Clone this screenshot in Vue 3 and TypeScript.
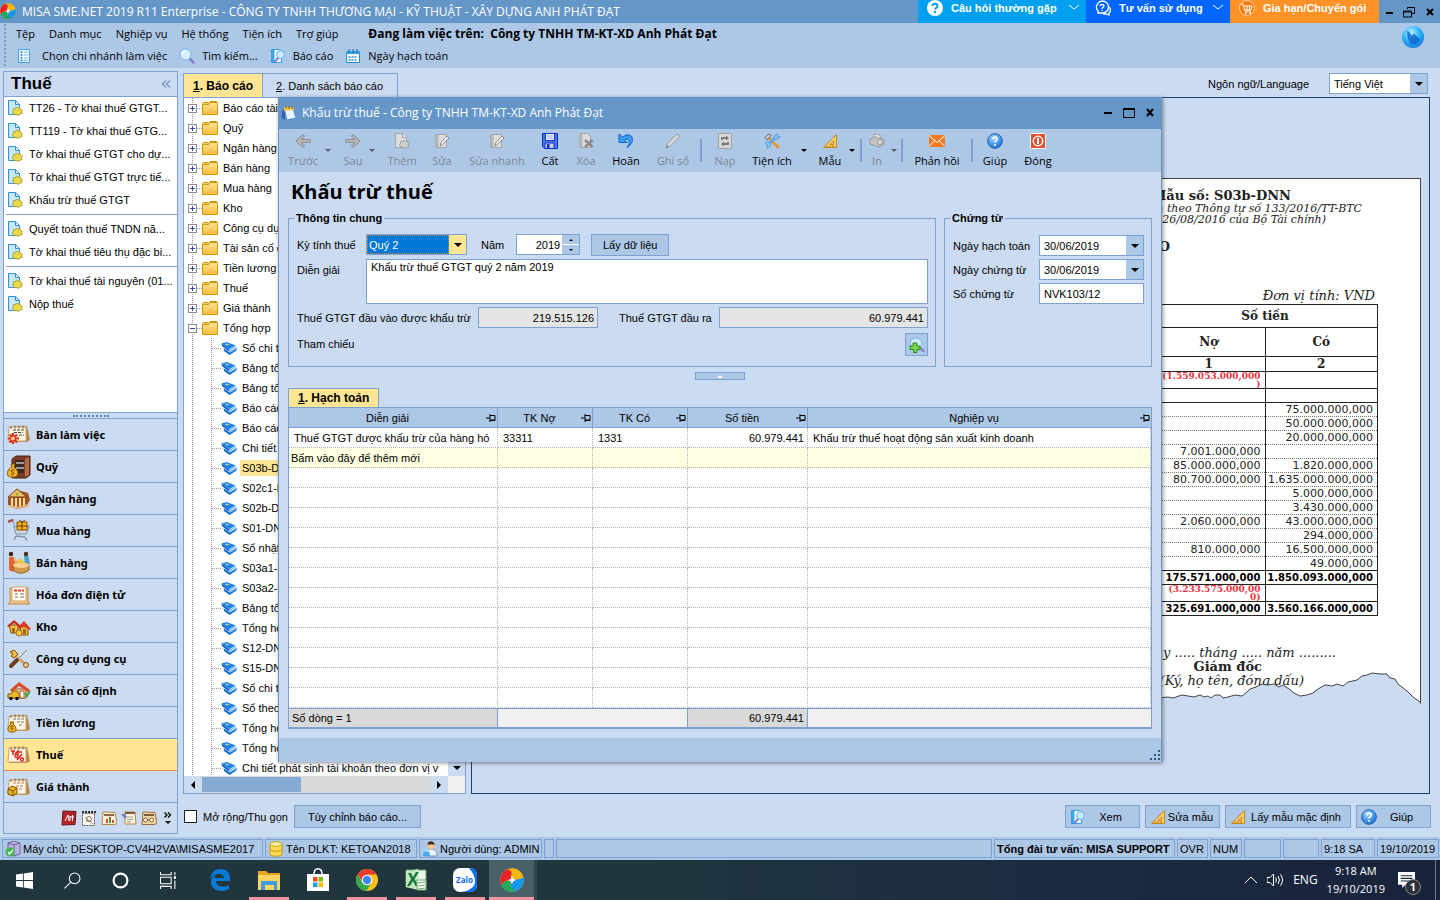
<script setup lang="ts">
import { ref } from 'vue'

interface TreeLeaf { label: string; selected?: boolean }
interface ReportRow { debit: string; credit: string }
interface Tool { kind: 'btn' | 'drop' | 'sep'; label?: string; icon?: string; off?: boolean }

const menus = ['Tệp', 'Danh mục', 'Nghiệp vụ', 'Hệ thống', 'Tiện ích', 'Trợ giúp']

const quickTools = [
  { label: 'Chọn chi nhánh làm việc', icon: 'list' },
  { label: 'Tìm kiếm...', icon: 'search' },
  { label: 'Báo cáo', icon: 'report' },
  { label: 'Ngày hạch toán', icon: 'calendar' },
]

const taskGroups: string[][] = [
  [
    'TT26 - Tờ khai thuế GTGT...',
    'TT119 - Tờ khai thuế GTG...',
    'Tờ khai thuế GTGT cho dự...',
    'Tờ khai thuế GTGT trực tiế...',
    'Khấu trừ thuế GTGT',
  ],
  ['Quyết toán thuế TNDN nă...', 'Tờ khai thuế tiêu thụ đặc bi...'],
  ['Tờ khai thuế tài nguyên (01...', 'Nộp thuế'],
]

const modules = [
  { label: 'Bàn làm việc', icon: 'm-desk' },
  { label: 'Quỹ', icon: 'm-safe' },
  { label: 'Ngân hàng', icon: 'm-bank' },
  { label: 'Mua hàng', icon: 'm-cart' },
  { label: 'Bán hàng', icon: 'm-sell' },
  { label: 'Hóa đơn điện tử', icon: 'm-invoice' },
  { label: 'Kho', icon: 'm-store' },
  { label: 'Công cụ dụng cụ', icon: 'm-tools' },
  { label: 'Tài sản cố định', icon: 'm-asset' },
  { label: 'Tiền lương', icon: 'm-salary' },
  { label: 'Thuế', icon: 'm-tax' },
  { label: 'Giá thành', icon: 'm-cost' },
]
const activeModule = ref('Thuế')
const extraModules = ['x-book', 'x-check', 'x-chart', 'x-note', 'x-link']

const folders = [
  'Báo cáo tài chính', 'Quỹ', 'Ngân hàng', 'Bán hàng', 'Mua hàng', 'Kho', 'Công cụ dụng cụ',
  'Tài sản cố định', 'Tiền lương', 'Thuế', 'Giá thành',
]
const leaves: TreeLeaf[] = [
  { label: 'Sổ chi tiết' }, { label: 'Bảng tổng' }, { label: 'Bảng tổng' },
  { label: 'Báo cáo' }, { label: 'Báo cáo' }, { label: 'Chi tiết' },
  { label: 'S03b-DNN', selected: true }, { label: 'S02c1-DNN' }, { label: 'S02b-DNN' },
  { label: 'S01-DNN' }, { label: 'Sổ nhật ký' }, { label: 'S03a1-DNN' }, { label: 'S03a2-DNN' },
  { label: 'Bảng tổng' }, { label: 'Tổng hợp' }, { label: 'S12-DNN' }, { label: 'S15-DNN' },
  { label: 'Sổ chi tiết' }, { label: 'Sổ theo dõi' }, { label: 'Tổng hợp' }, { label: 'Tổng hợp' },
  { label: 'Chi tiết phát sinh tài khoản theo đơn vị v' },
]

const reportRows: ReportRow[] = [
  { debit: '', credit: '75.000.000,000' },
  { debit: '', credit: '50.000.000,000' },
  { debit: '', credit: '20.000.000,000' },
  { debit: '7.001.000,000', credit: '' },
  { debit: '85.000.000,000', credit: '1.820.000,000' },
  { debit: '80.700.000,000', credit: '1.635.000.000,000' },
  { debit: '', credit: '5.000.000,000' },
  { debit: '', credit: '3.430.000,000' },
  { debit: '2.060.000,000', credit: '43.000.000,000' },
  { debit: '', credit: '294.000,000' },
  { debit: '810.000,000', credit: '16.500.000,000' },
  { debit: '', credit: '49.000,000' },
]

const tools: Tool[] = [
  { kind: 'btn', label: 'Trước', icon: 'g-prev', off: true },
  { kind: 'drop', off: true },
  { kind: 'btn', label: 'Sau', icon: 'g-next', off: true },
  { kind: 'drop', off: true },
  { kind: 'btn', label: 'Thêm', icon: 'g-add', off: true },
  { kind: 'btn', label: 'Sửa', icon: 'g-edit', off: true },
  { kind: 'btn', label: 'Sửa nhanh', icon: 'g-edit', off: true },
  { kind: 'btn', label: 'Cất', icon: 'save' },
  { kind: 'btn', label: 'Xóa', icon: 'g-del', off: true },
  { kind: 'btn', label: 'Hoãn', icon: 'undo' },
  { kind: 'btn', label: 'Ghi sổ', icon: 'g-pen', off: true },
  { kind: 'sep' },
  { kind: 'btn', label: 'Nạp', icon: 'g-reload', off: true },
  { kind: 'btn', label: 'Tiện ích', icon: 'utils' },
  { kind: 'drop' },
  { kind: 'btn', label: 'Mẫu', icon: 'ruler' },
  { kind: 'drop' },
  { kind: 'sep' },
  { kind: 'btn', label: 'In', icon: 'g-print', off: true },
  { kind: 'drop', off: true },
  { kind: 'sep' },
  { kind: 'btn', label: 'Phản hồi', icon: 'mail' },
  { kind: 'sep' },
  { kind: 'btn', label: 'Giúp', icon: 'help' },
  { kind: 'btn', label: 'Đóng', icon: 'power' },
]

const columns = ['Diễn giải', 'TK Nợ', 'TK Có', 'Số tiền', 'Nghiệp vụ']

const period = ref('Quý 2')
const year = ref('2019')
const description = ref('Khấu trừ thuế GTGT quý 2 năm 2019')
const inputTax = ref('219.515.126')
const outputTax = ref('60.979.441')
const postingDate = ref('30/06/2019')
const voucherDate = ref('30/06/2019')
const voucherNo = ref('NVK103/12')
const language = ref('Tiếng Việt')
const expandAll = ref(false)

const pinned = [
  { icon: 't-edge', name: 'Edge', open: false },
  { icon: 't-folder', name: 'File Explorer', open: true },
  { icon: 't-store', name: 'Store', open: false },
  { icon: 't-chrome', name: 'Chrome', open: true },
  { icon: 't-excel', name: 'Excel', open: true },
  { icon: 't-zalo', name: 'Zalo', open: true },
]
</script>

<template>
  <svg class="defs" aria-hidden="true">
    <defs>
      <linearGradient id="gold" x1="0" y1="0" x2="0" y2="1"><stop offset="0" stop-color="#ffe596" /><stop offset="1" stop-color="#f7bb3c" /></linearGradient>
      <radialGradient id="ball" cx=".4" cy=".3" r=".8"><stop offset="0" stop-color="#a9dcff" /><stop offset=".6" stop-color="#3d93ea" /><stop offset="1" stop-color="#175fc4" /></radialGradient>
      <radialGradient id="globe" cx=".4" cy=".3" r=".8"><stop offset="0" stop-color="#b5f4ff" /><stop offset=".5" stop-color="#2eb1fa" /><stop offset="1" stop-color="#0c6fd8" /></radialGradient>

      <symbol id="logo" viewBox="0 0 16 16">
        <circle cx="8" cy="8" r="7.800" fill="#fcb713" />
        <path d="M8 8C5 8.500 3 8 1 11.500A8 8 0 0 1 5 .8C8 2 8.500 3 7 5.500z" fill="#e8222c" />
        <path d="M8 8c3-.5 5 0 7.700-2A8 8 0 0 1 9 15.800C7 14 7 12 8 8z" fill="#1597ec" />
        <path d="M1 11.500C2 8.500 5 8 7.500 9 6.500 12 8 14 11 15.300 6 17 2 15 1 11.500z" fill="#25a95c" />
        <path d="M8 5.300 8.800 7.200 10.700 8 8.800 8.800 8 10.700 7.200 8.800 5.300 8 7.200 7.200z" fill="#fff" />
      </symbol>
      <symbol id="list" viewBox="0 0 16 16">
        <path d="M2.500 1.500h11v13h-11z" fill="#eef8ff" stroke="#3b9fe0" /><path d="M4.500 4h2M4.500 7h2M4.500 10h2M4.500 12.500h2" stroke="#1f7fd0" stroke-width="1.500" /><path d="M8 4h4M8 7h4M8 10h4M8 12.500h4" stroke="#7cbcf0" />
      </symbol>
      <symbol id="search" viewBox="0 0 16 16">
        <path d="m10 10 4.500 4.500" stroke="#8b7fd0" stroke-width="2.500" stroke-linecap="round" /><circle cx="6.500" cy="6.500" r="5.500" fill="#d8f0ff" stroke="#6db8ec" /><path d="M3.500 6a3 3 0 0 1 3-3" stroke="#fff" stroke-width="1.500" fill="none" />
      </symbol>
      <symbol id="report" viewBox="0 0 16 16">
        <path d="M1.500 1.500h8l2 2v11h-10z" fill="#fff" stroke="#2e9fe6" /><path d="M2 2h2.500v12H2z" fill="#3aa5ea" /><path d="m9 9-4 4.500" stroke="#8b7fd0" stroke-width="2.200" stroke-linecap="round" /><circle cx="10.500" cy="6.500" r="4" fill="#c9eaff" stroke="#5bb0ea" />
      </symbol>
      <symbol id="calendar" viewBox="0 0 16 16">
        <path d="M1.500 3.500h13v11h-13z" fill="#f4fbff" stroke="#2589d0" /><path d="M1 3h14v3H1z" fill="#3aa0e8" /><path d="M4 1v4M8 1v4M12 1v4" stroke="#16649f" /><path d="M3.500 9h9M3.500 12h9" stroke="#3a8ccc" stroke-width="1.500" stroke-dasharray="2 1" />
      </symbol>
      <symbol id="task" viewBox="0 0 16 16">
        <path d="M1.500.5h7l4 4v10h-11z" fill="#c5e8ff" stroke="#2f91d8" /><path d="M8.500.5v4h4z" fill="#fff" stroke="#2f91d8" /><path d="m9.500 7 1.500 1.200 2-.6.6 1.900 1.900 1-1 1.500.6 1.600-2.300.5-1.300 1.400L9.500 14.500l-2.400.3-.4-1.700-1.700-1.300 1.500-1.300.2-1.900 2-.1z" fill="#ead94a" stroke="#a8921b" stroke-width=".8" />
      </symbol>
      <symbol id="folder" viewBox="0 0 16 16">
        <path d="M.5 13.500v-10l1-1h4l1.500 2h-5l-1 9zM7 2.500l1-1h6.500v3" fill="#f8cf68" stroke="#c68f00" /><path d="M.5 4.500h6l1-2h8v12H.5z" fill="url(#gold)" stroke="#d09a09" />
      </symbol>
      <symbol id="book" viewBox="0 0 16 16">
        <path d="M.5 3.500 6 2l8.500 3.500L8 9.500z" fill="#1c86e8" /><path d="M.5 3.500 8 9.500v2L1 6z" fill="#0c5abf" /><path d="m8 9.500 6.500-4 .5 1.500-7 4.500z" fill="#8cc6f6" />
        <path d="m2.500 8 5.500 4 7.500-4.500v3L8.500 15 3 11z" fill="#0f6ad0" /><path d="m8.500 12.500 6.500-3.700" stroke="#bfe0ff" stroke-width=".9" /><path d="m4 4.200 2.500-.8 2 .9-2.500.9z" fill="#f0cf7c" />
      </symbol>
      <symbol id="notes" viewBox="0 0 16 16">
        <path d="m1 6 3-3v12l-3-2z" fill="#4455b8" /><path d="M3 3h9l3 10-9 2z" fill="#e9f6ff" stroke="#4c8fdc" /><path d="M3 2h9l1 3-10 1z" fill="#f5cf4c" /><path d="M5 1v3M8 1v3M11 1v3" stroke="#704a10" />
      </symbol>
      <symbol id="ruler" viewBox="0 0 16 16">
        <path d="M14.500 1.500v13h-13z" fill="#fbd065" stroke="#c8851a" /><path d="M11.500 8v3.500H8z" fill="#c9dcf0" stroke="#c8851a" /><path d="M5 14v-1.500M8 14v-1.500M11 14v-1.500" stroke="#87540b" />
      </symbol>
      <symbol id="help" viewBox="0 0 16 16">
        <circle cx="8" cy="8" r="7.300" fill="url(#ball)" stroke="#2160ae" /><path d="M5.800 6.200C5.800 3.300 10.400 3.500 10.200 6.200 10 7.700 8 7.700 8 9.600" fill="none" stroke="#fff" stroke-width="1.700" /><circle cx="8" cy="12" r="1.100" fill="#fff" />
      </symbol>
      <symbol id="addfind" viewBox="0 0 16 16">
        <path d="m10.500 10.500 4 3.500" stroke="#8b7fd0" stroke-width="2.500" stroke-linecap="round" /><circle cx="7" cy="6.500" r="5.500" fill="#cdeeff" stroke="#7bbfe8" /><path d="M4 6h4v3h3v3.500H8v3H4.500v-3H1V9h3z" fill="#77d64a" stroke="#278a1c" />
      </symbol>
      <symbol id="g-prev" viewBox="0 0 16 16"><path d="M8 1.500 9.500 3 6.500 6.500h9v3h-9l3 3.500L8 14.500 1 8z" fill="#b5b5b5" stroke="#8e8e8e" /></symbol>
      <symbol id="g-next" viewBox="0 0 16 16"><path d="M8 1.500 6.500 3l3 3.500h-9v3h9l-3 3.500L8 14.500 15 8z" fill="#b5b5b5" stroke="#8e8e8e" /></symbol>
      <symbol id="g-add" viewBox="0 0 16 16"><path d="M1.500.5h7l4 4v10h-11z" fill="#ddd" stroke="#a3a3a3" /><path d="M8.500.5v4h4" fill="#eee" stroke="#a3a3a3" /><path d="m9.500 7 1.500 1.200 2-.6.6 1.900 1.900 1-1 1.500.6 1.600-2.300.5-1.300 1.400L9.500 14.500l-2.400.3-.4-1.700-1.700-1.300 1.500-1.300.2-1.900 2-.1z" fill="#cfcfcf" stroke="#959595" stroke-width=".8" /></symbol>
      <symbol id="g-edit" viewBox="0 0 16 16"><path d="M1.500 1.500h11v13h-11z" fill="#ddd" stroke="#a3a3a3" /><path d="M1.500 1.500h3v13h-3z" fill="#b5b5b5" /><path d="m6 13 1-3.500L13 3l2 2-6.500 6.500z" fill="#eee" stroke="#8b8b8b" /></symbol>
      <symbol id="g-del" viewBox="0 0 16 16"><path d="M1.500.5h8l3 3v11h-11z" fill="#ddd" stroke="#a3a3a3" /><path d="M1.500.5h3v14h-3z" fill="#b5b5b5" /><path d="m7 7 7.500 7M14.500 7 7 14" stroke="#888" stroke-width="2.500" /></symbol>
      <symbol id="g-pen" viewBox="0 0 16 16"><path d="m1 15 1.500-4.500L12 1l3 2.500-9.500 9.500z" fill="#d6d6d6" stroke="#9a9a9a" /><path d="m1 15 1-2.500L3.500 14z" fill="#777" /></symbol>
      <symbol id="g-reload" viewBox="0 0 16 16"><path d="M1.500.5h13v15h-13z" fill="#d7d7d7" stroke="#a3a3a3" /><path d="M5 7V5h5M11 9v2H6" fill="none" stroke="#777" stroke-width="1.800" /><path d="M9 2.500 12 5 9 7.500zM7 8.500 4 11l3 2.500z" fill="#777" /></symbol>
      <symbol id="g-print" viewBox="0 0 16 16"><path d="m5 1 6 1 1 5-7-1z" fill="#e2e2e2" stroke="#a0a0a0" /><path d="m1 6 5-2 9 2.500v4.500L10 14 1 11z" fill="#c4c4c4" stroke="#999" /><circle cx="11" cy="9" r="2.500" fill="#ddd" stroke="#999" /></symbol>
      <symbol id="save" viewBox="0 0 16 16"><path d="M.5.500h15v15H2.500L.5 13.500z" fill="#4a78f2" stroke="#0b2fc0" /><path d="M3.500.5h9v7h-9z" fill="#f1f5ff" stroke="#0b2fc0" /><path d="M3 10h9v5.500H3z" fill="#c8d4fa" stroke="#0b2fc0" /><path d="M5 11h2.500v4H5z" fill="#0b2fc0" /><path d="M5 3h6M5 5.200h6" stroke="#8ca4ee" /></symbol>
      <symbol id="undo" viewBox="0 0 16 16"><path d="M1 1v8.500h8L6.500 7C10 4.500 13.500 8 9 14.500c8-4.500 7-14-1-12.500L4.500 4z" fill="#3b9bf0" stroke="#1568c6" /></symbol>
      <symbol id="utils" viewBox="0 0 16 16"><path d="m5.500 5.500 8.500 8.500" stroke="#e09a2c" stroke-width="3" stroke-linecap="round" /><path d="M1 4.500 4.500 1l3 1.500L3 7z" fill="#c7c7c7" stroke="#555" stroke-width=".8" /><path d="m3 13 8-8" stroke="#5ba7ec" stroke-width="3" /><path d="M10 5a3.500 3.500 0 0 1 4-4l-2 2.500 1 1L15.500 3A3.500 3.500 0 0 1 11 6.500zM1 10a3 3 0 0 1 5 3.500l-3 2 .5-3z" fill="#8cc8f8" stroke="#3486cf" stroke-width=".6" /></symbol>
      <symbol id="mail" viewBox="0 0 16 16"><path d="M0 2h16v12H0z" fill="#f47b20" /><path d="m0 2.500 8 7 8-7M0 13.500l6-6M16 13.500l-6-6" fill="none" stroke="#fff" /></symbol>
      <symbol id="power" viewBox="0 0 16 16"><rect x=".5" y=".5" width="15" height="15" rx="1" fill="#e0502c" stroke="#fff" /><circle cx="8" cy="8" r="4.700" fill="none" stroke="#fff" stroke-width="1.500" /><path d="M8 5v6" stroke="#fff" stroke-width="2" /></symbol>
      <symbol id="pin" viewBox="0 0 10 8"><path d="M0 4h4M4 0v8M4 1.500h5v5H4" fill="none" stroke="#000" /><path d="M4 5.500h5v1H4z" /></symbol>

      <symbol id="card" viewBox="0 0 24 20"><path d="m3 3 17-1 3 14-3 2H3z" fill="#b9854a" /><path d="M2 3h17v14H1z" fill="#fff6e4" stroke="#c9a573" /><path d="M4 2v3M8 1.500v3M12 1.500v3M16 1.500v3" stroke="#7c5b3a" /></symbol>
      <symbol id="m-desk" viewBox="0 0 24 24"><use href="#card" width="24" height="20" y="1" /><path d="M6 7h11M7 9.500h9M12 12h5" stroke="#444" stroke-dasharray="3 1" /><path d="M6 10v11M1 15.500h11M2.500 11.500l7.500 8M10 11.500l-7.500 8" stroke="#dd3117" stroke-width="2.200" /><circle cx="6" cy="15.500" r="2" fill="#fc9" /></symbol>
      <symbol id="m-safe" viewBox="0 0 24 24"><path d="m5 4 4-3h14v19l-4 3H5z" fill="#7b3d27" stroke="#4d2014" /><path d="M8 5h9v13H8z" fill="#3c2a20" /><path d="m18 4 4-2v18l-4 2z" fill="#b66a48" /><path d="M9 8h8M9 13h8" stroke="#999" stroke-width="2" /><path d="M4 9h4l-1 3c5 3 5 10 0 10H4c-5 0-5-7 1-10z" fill="#f2b526" stroke="#8a5605" /><path d="M7.500 15c-4-1-4 2-2 2s2 3-1.500 2" fill="none" stroke="#6b3a00" /></symbol>
      <symbol id="m-bank" viewBox="0 0 24 24"><path d="M1 11 10 3l11 3 2 7-4 7-9 2-9-4z" fill="#9d5323" /><path d="m1 10 9-8 10 8z" fill="#f0bd6c" stroke="#7d3c12" /><path d="M5 11v8M9 11v9M13 11v9M17 11v8" stroke="#ffe0a0" stroke-width="2" /><path d="m2 19 9 2 11-3" stroke="#e7b478" stroke-width="2" fill="none" /><circle cx="10" cy="7" r="1.700" fill="#a5b32a" /></symbol>
      <symbol id="m-cart" viewBox="0 0 24 24"><path d="M1 2 6 1l3 13h10l3-8" fill="none" stroke="#8ba6c0" stroke-width="1.500" /><path d="M7 8h15l-3 7H9z" fill="#cddae6" stroke="#8197ab" /><path d="M10 3h10v8H10z" fill="#f6b61e" stroke="#875000" /><path d="M15 3v8M10 7h10M12 1l3 2 3-2" stroke="#6c3800" fill="none" /><path d="M1 3l5-2" stroke="#b04a3a" stroke-width="2" /><path d="m9 17 9 1M9 17l-2 4M18 18l2 4" stroke="#8197ab" stroke-width="1.500" /></symbol>
      <symbol id="m-sell" viewBox="0 0 24 24"><path d="M2 6h5l2 7-3 8-4-2z" fill="#e2632b" /><circle cx="4" cy="3" r="2.200" fill="#3b2416" /><path d="m7 8 4 4" stroke="#f0b78c" stroke-width="2" /><path d="m17 5 4-1 2 9h-5z" fill="#4aa2c9" /><circle cx="19" cy="3" r="2.200" fill="#432d1e" /><path d="M6 14c4-4 12-4 16 0v5c-4 4-11 4-15 1z" fill="#d59a4d" stroke="#93601f" /><ellipse cx="14" cy="14" rx="8" ry="3" fill="#f6d196" /><path d="m10 10 3-3 4 5-3 1z" fill="#f5c92b" /></symbol>
      <symbol id="m-invoice" viewBox="0 0 24 24"><path d="M3 5h18v14l2 2H1l2-2z" fill="#efc688" stroke="#bd8a48" /><path d="M5 4h14v14H5z" fill="#fffaf2" stroke="#d4a86b" /><path d="M7 7.500h10" stroke="#e0382a" stroke-width="2" stroke-dasharray="3 1" /><path d="M8 11h3M13 11h4M8 14h3M13 14h4" stroke="#777" /></symbol>
      <symbol id="m-store" viewBox="0 0 24 24"><path d="M2 10h9v8H4zM13 12h8v8h-6z" fill="#f4c142" stroke="#7f4c0e" /><path d="m0 11 7-6 7 6-2 1-5-4-5 4z" fill="#c62a1e" /><path d="m11 12 6-6 7 8-2 1-5-4-5 3z" fill="#dc3a20" /><path d="M5 13h3v5H5zM16 14h3v5h-3z" fill="#ad6512" /><circle cx="12" cy="18" r="3" fill="#f6cd45" stroke="#9c6310" /></symbol>
      <symbol id="m-tools" viewBox="0 0 24 24"><path d="m8 8 11 10" stroke="#d5a15c" stroke-width="3" stroke-linecap="round" /><path d="M3 5 7 3l4 4-4 4-3-2 2-2z" fill="#f4be38" stroke="#7c4c12" /><path d="m20 3-11 11" stroke="#d8dde2" stroke-width="3" /><path d="m20 3-11 11" stroke="#666" stroke-width=".8" /><path d="m10 13-6 6" stroke="#6d3f20" stroke-width="4" stroke-linecap="round" /><circle cx="19" cy="18" r="2.500" fill="#f2cf8c" stroke="#7c4c12" /></symbol>
      <symbol id="m-asset" viewBox="0 0 24 24"><path d="M6 10h13v9H6z" fill="#f6cf98" stroke="#9a5a26" /><path d="m3 11 9-8 11 8-2 2-9-6-7 6z" fill="#dc4a24" /><path d="M13 12h4v7h-4z" fill="#fff" stroke="#a65a2a" /><path d="M1 15h3l2-3h4l2 3 1 4H1z" fill="#f2b92a" stroke="#855b09" /><circle cx="4" cy="19.500" r="1.700" /><circle cx="10" cy="19.500" r="1.700" /><path d="m18 14 2 3 3-5" stroke="#3ca33c" stroke-width="2" fill="none" /></symbol>
      <symbol id="m-salary" viewBox="0 0 24 24"><use href="#card" width="24" height="20" y="2" /><path d="M6 8h11M10 11h7M12 14h4" stroke="#777" stroke-dasharray="3 1" /><path d="M3 11h4l-1 2c4 3 4 8 0 8H4c-4 0-4-5 0-8z" fill="#f2b526" stroke="#8a5605" /><path d="M6.500 15.500c-3-1-3 1-1.500 1.500s1 2-1.500 1" fill="none" stroke="#6b3a00" /></symbol>
      <symbol id="m-tax" viewBox="0 0 24 24"><use href="#card" width="24" height="20" y="2" /><path d="M4 8h4M6 8v4M8 11l3-3v4M12 9h3" stroke="#e01818" stroke-width="1.500" fill="none" /><path d="m15 11-5 6" stroke="#e01818" stroke-width="1.500" /><circle cx="9.500" cy="13" r="1.500" fill="none" stroke="#e01818" stroke-width="1.300" /><circle cx="15" cy="16.500" r="1.500" fill="none" stroke="#e01818" stroke-width="1.300" /></symbol>
      <symbol id="m-cost" viewBox="0 0 24 24"><use href="#card" width="24" height="20" y="2" /><path d="M6 8h11M9 11h8M12 14h4" stroke="#d07060" stroke-dasharray="3 1" /><path d="m1 14 4-3 5 2v5l-4 3-5-2z" fill="#f0b41f" stroke="#7d5204" /><path d="m1 14 5 2 4-3M6 16v5" stroke="#7d5204" fill="none" /></symbol>
      <symbol id="x-book" viewBox="0 0 16 16"><path d="m2 1 13 .5-1 13L1 15z" fill="#b3232a" stroke="#6d0f14" /><path d="m4 11 3-6 1 6M9 6v5M11.500 5v6M9 7h4" stroke="#fff" fill="none" /></symbol>
      <symbol id="x-check" viewBox="0 0 16 16"><path d="M1.500 3.500h12v12h-12z" fill="#fff8ea" stroke="#555" stroke-dasharray="2 1" /><path d="M1 2h14" stroke="#333" stroke-width="2" stroke-dasharray="2 1" /><path d="m4 7 3 3 5 4M5 11h5" stroke="#999" /><circle cx="8" cy="9" r="2.500" fill="none" stroke="#777" /></symbol>
      <symbol id="x-chart" viewBox="0 0 16 16"><path d="m2 2 12 .5 2 11-3 1H1z" fill="#fff3dc" stroke="#b9854a" /><path d="M3 4h10v2H3z" fill="#8c6a48" /><path d="M6 13V9M9 13V7M12 13v-3" stroke="#dd4a2a" stroke-width="2" /><path d="M9 13V9" stroke="#3f9f3f" stroke-width="2" /></symbol>
      <symbol id="x-note" viewBox="0 0 16 16"><path d="m4 2 10 0 1 12H4z" fill="#fff3dc" stroke="#b9854a" /><path d="M4 2h10v2H4z" fill="#7b5b3d" /><path d="M6 7h6M6 9.500h6M6 12h4" stroke="#999" /><path d="M0 4h4l2 3-2 2z" fill="#6d7fc4" /></symbol>
      <symbol id="x-link" viewBox="0 0 16 16"><path d="m2 2 12 .5 2 11-3 1H1z" fill="#f4d7a6" stroke="#9c6f3a" /><path d="M3 4h10v2H3z" fill="#7b5b3d" /><circle cx="4.500" cy="10" r="2" fill="#fff" stroke="#8c5a28" /><circle cx="10.500" cy="10" r="2" fill="#fff" stroke="#8c5a28" /><path d="M6 10h3" stroke="#8c5a28" /></symbol>

      <symbol id="server" viewBox="0 0 16 16"><path d="m3 2 6-2 6 2v11l-6 2-6-2z" fill="#b9b4dc" stroke="#6c659d" /><path d="m3 2 6 2 6-2M9 4v11" stroke="#6c659d" fill="none" /><circle cx="5" cy="11" r="4.500" fill="#3fb34b" /><path d="m3 11 1.500 2L8 9" stroke="#fff" stroke-width="1.500" fill="none" /></symbol>
      <symbol id="db" viewBox="0 0 16 16"><path d="M2 3v10c0 3 12 3 12 0V3z" fill="#fbdc57" stroke="#c89a12" /><ellipse cx="8" cy="3" rx="6" ry="2.300" fill="#fff1a4" stroke="#c89a12" /><path d="M2 8c0 3 12 3 12 0" fill="none" stroke="#c89a12" /></symbol>
      <symbol id="user" viewBox="0 0 16 16"><path d="M3 15c0-6 3-7 6-7s6 1 6 7z" fill="#eef4fb" stroke="#7591b5" /><circle cx="9" cy="4.500" r="3.500" fill="#f7c690" /><path d="M5.500 4c0-5 7-5 7 0-2-1-4-1-7 0z" fill="#3a2a1c" /><path d="M1 15c0-4 1.500-5 3.500-5S8 11 8 15z" fill="#4aa8ee" /><circle cx="4.500" cy="9" r="2" fill="#9fd4fa" /></symbol>

      <symbol id="t-edge" viewBox="0 0 24 24"><path d="M2 11C3 4 7 1 13 1c6 0 9 4 9 9v3H8c0 6 8 7 13 4v4c-7 4-18 2-18-7 0-4 2-6 5-7-1 1-1 2-1 3h9c0-5-10-6-14 1z" fill="#0b7ad6" /></symbol>
      <symbol id="t-folder" viewBox="0 0 24 24"><path d="M1 3h8l2 2h12v4H1z" fill="#e5a424" /><path d="M1 7h22v15H1z" fill="#fcd462" /><path d="M4 22v-9h16v9h-3v-5H8v5z" fill="#3f9ce0" /></symbol>
      <symbol id="t-store" viewBox="0 0 24 24"><path d="M1 6h22v17H1z" fill="#fff" /><path d="M8 6c0-7 8-7 8 0" fill="none" stroke="#fff" stroke-width="1.500" /><path d="M7 9h4.500v4.500H7z" fill="#f25022" /><path d="M12.500 9H17v4.500h-4.500z" fill="#7fba00" /><path d="M7 14.500h4.500V19H7z" fill="#00a4ef" /><path d="M12.500 14.500H17V19h-4.500z" fill="#ffb900" /></symbol>
      <symbol id="t-chrome" viewBox="0 0 24 24"><circle cx="12" cy="12" r="11" fill="#fbc116" /><path d="M12 12 2.500 6.500A11 11 0 0 1 21.500 6.500H12z" fill="#e33b2e" /><path d="M2.500 6.500 8 16l3.500 7A11 11 0 0 1 2.500 6.500z" fill="#2da94f" /><path d="M8 14.500 2.500 6.500 12 7z" fill="#e33b2e" /><path d="M7 14 11.500 23 16 15z" fill="#2da94f" /><circle cx="12" cy="12" r="5.300" fill="#fff" /><circle cx="12" cy="12" r="4.200" fill="#4285f4" /></symbol>
      <symbol id="t-excel" viewBox="0 0 24 24"><path d="M2 2h20v17H2z" fill="#e9f6e9" stroke="#5aa85c" /><path d="m2 4 12-3v21L2 19z" fill="#c6e6c4" /><path d="m4 5 3 0 2 4 3-5h3l-4.500 7L15 18h-3.500L9 13l-3 5H3l4-7z" fill="#1d7c3b" /><path d="M13 12h9v10h-9z" fill="#fff" stroke="#69a868" /><path d="m14 15 7-1M14 18l7-1M14 21l7-1" stroke="#69a868" /></symbol>
      <symbol id="t-zalo" viewBox="0 0 24 24"><rect width="24" height="24" rx="7" fill="#fff" /><path d="M7 0h10q7 0 7 7v10q0 7-7 7H8q10-1 13-8 2-8-5-16z" fill="#0b6cf5" /><path d="M4 2c-5 5-4 13 0 18l-1 3c10 1 20-2 19-11S13-3 4 2z" fill="#fff" /></symbol>
    </defs>
  </svg>

  <div class="screen">
    <main class="app">
      <header class="titlebar">
        <svg class="i16"><use href="#logo" /></svg>
        <h1>MISA SME.NET 2019 R11 Enterprise - CÔNG TY TNHH THƯƠNG MẠI - KỸ THUẬT - XÂY DỰNG ANH PHÁT ĐẠT</h1>
        <button class="promo faq" type="button">
          <svg class="i16" viewBox="0 0 16 16"><circle cx="8" cy="8" r="8" fill="#fff" /><path d="M5.500 6C5.500 3 10.500 3 10.500 6 10.500 8 8 8 8 9.500" fill="none" stroke="#00a0f0" stroke-width="2" /><circle cx="8" cy="12" r="1.200" fill="#00a0f0" /></svg>
          <span>Câu hỏi thường gặp</span>
          <svg class="chev" viewBox="0 0 10 6"><path d="m0 1 5 4 5-4" /></svg>
        </button>
        <button class="promo advice" type="button">
          <svg class="i16" viewBox="0 0 16 16"><path d="M3 13V11A6 6 0 1 1 7 13z" fill="none" stroke="#fff" stroke-width="1.300" /><path d="M14 7c3 3 1 5 0 6v2l-3-1H8" fill="none" stroke="#fff" stroke-width="1.300" /><path d="M5 6c0-2 4-2 4 0 0 1-2 1-2 3M7 10v1" fill="none" stroke="#fff" stroke-width="1.300" /></svg>
          <span>Tư vấn sử dụng</span>
          <svg class="chev" viewBox="0 0 10 6"><path d="m0 1 5 4 5-4" /></svg>
        </button>
        <button class="promo renew" type="button">
          <svg class="i16" viewBox="0 0 16 16"><circle cx="8" cy="8" r="7.500" fill="#ff7a10" stroke="#ffd2a0" /><path d="M2 4h2l2 7h6M5 6h8l-1 4H6M8 6v4M10.500 6v4" fill="none" stroke="#fff" /><circle cx="7" cy="13" r="1" fill="#fff" /><circle cx="11" cy="13" r="1" fill="#fff" /></svg>
          <span>Gia hạn/Chuyển gói</span>
        </button>
        <div class="winctl">
          <button type="button" aria-label="Thu nhỏ"><svg viewBox="0 0 12 12"><path d="M3 7h7" stroke-width="2" /></svg></button>
          <button type="button" aria-label="Khôi phục"><svg viewBox="0 0 12 12"><path d="M4.500 3V1.500h7v6H9" /><path d="M.5 5h8v6h-8zM.5 6h8" /></svg></button>
          <button type="button" aria-label="Đóng ứng dụng"><svg viewBox="0 0 12 12"><path d="m3 3 6 6M9 3 3 9" stroke-width="2" /></svg></button>
        </div>
      </header>

      <div class="menus">
        <div class="bars">
          <nav class="menubar">
            <button v-for="m in menus" :key="m" type="button">{{ m }}</button>
            <strong>Đang làm việc trên:&nbsp; Công ty TNHH TM-KT-XD Anh Phát Đạt</strong>
          </nav>
          <div class="quickbar">
            <button v-for="t in quickTools" :key="t.label" type="button">
              <svg class="i16"><use :href="'#' + t.icon" /></svg>{{ t.label }}
            </button>
          </div>
        </div>
        <svg class="globe" viewBox="0 0 22 22"><circle cx="11" cy="11" r="11" fill="url(#globe)" /><path d="M5 5c3 0 4 3 4 5 1-1 2-2 4-2 1 3 4 3 5 6-2 4-5 5-9 4-2-2-4-7-4-13z" fill="#0b62c8" opacity=".8" /></svg>
      </div>

      <div class="workspace">
        <aside class="sidebar">
          <div class="side-head"><h2>Thuế</h2><button type="button" aria-label="Thu gọn"><svg viewBox="0 0 9 8"><path d="M4 .5.5 4 4 7.500M8 .5 4.500 4 8 7.500" /></svg></button></div>
          <div class="tasks">
            <ul v-for="(g, gi) in taskGroups" :key="gi">
              <li v-for="t in g" :key="t"><a href="#"><svg class="i16"><use href="#task" /></svg>{{ t }}</a></li>
            </ul>
          </div>
          <div class="splitter"><i></i></div>
          <nav class="modules">
            <button v-for="m in modules" :key="m.label" type="button" :class="{ active: m.label === activeModule }" @click="activeModule = m.label">
              <svg><use :href="'#' + m.icon" /></svg>{{ m.label }}
            </button>
          </nav>
          <div class="extras">
            <button v-for="x in extraModules" :key="x" type="button" :aria-label="x"><svg class="i16"><use :href="'#' + x" /></svg></button>
            <button type="button" class="more" aria-label="Thêm mục"><svg viewBox="0 0 8 12"><path d="m.5.5 2.500 2.500L.5 5.500M4 .5 6.500 3 4 5.500" fill="none" stroke="#000" stroke-width="1.300" /><path d="M1 9h6l-3 3z" /></svg></button>
          </div>
        </aside>

        <section class="content">
          <div class="tabrow">
            <button type="button" class="tab on"><u>1</u>. Báo cáo</button>
            <button type="button" class="tab"><u>2</u>. Danh sách báo cáo</button>
            <label for="lang">Ngôn ngữ/Language</label>
            <div class="combo lang">
              <select id="lang" v-model="language"><option>Tiếng Việt</option></select>
              <span class="drop"><svg viewBox="0 0 8 4"><path d="M0 0h8L4 4z" /></svg></span>
            </div>
          </div>

          <div class="panes">
            <div class="treepane">
              <div class="treebody">
                <ul class="tree">
                  <li v-for="f in folders" :key="f"><span class="box plus"></span><span class="dots"></span><svg class="i16"><use href="#folder" /></svg><span class="name">{{ f }}</span></li>
                  <li><span class="box"></span><span class="dots"></span><svg class="i16"><use href="#folder" /></svg><span class="name">Tổng hợp</span></li>
                  <li v-for="(l, i) in leaves" :key="i" class="leaf"><span class="dots"></span><svg class="i16"><use href="#book" /></svg><span class="name" :class="{ sel: l.selected }">{{ l.label }}</span></li>
                </ul>
                <div class="vscroll"><button type="button" aria-label="Cuộn xuống"><svg viewBox="0 0 8 4"><path d="M0 0h8L4 4z" /></svg></button></div>
              </div>
              <div class="hscroll">
                <button type="button" aria-label="Cuộn trái"><svg viewBox="0 0 5 8"><path d="M5 0v8L1 4z" /></svg></button>
                <span class="thumb"></span>
                <button type="button" class="end" aria-label="Cuộn phải"><svg viewBox="0 0 5 8"><path d="M0 0v8l4-4z" /></svg></button>
                <span class="corner"></span>
              </div>
            </div>

            <div class="preview">
              <article class="paper">
                <p class="form-no">Mẫu số: S03b-DNN</p>
                <p class="rule-1">(Ban hành theo Thông tư số 133/2016/TT-BTC</p>
                <p class="rule-2">Ngày 26/08/2016 của Bộ Tài chính)</p>
                <p class="caption">BÁO CÁO</p>
                <p class="unit">Đơn vị tính: VND</p>
                <table>
                  <thead>
                    <tr class="h1"><th colspan="2">Số tiền</th></tr>
                    <tr class="h2"><th>Nợ</th><th>Có</th></tr>
                    <tr class="h3"><th>1</th><th>2</th></tr>
                  </thead>
                  <tbody>
                    <tr class="red"><td>(1.559.053.000,000<br>)</td><td></td></tr>
                    <tr class="solid"><td></td><td></td></tr>
                    <tr v-for="(r, i) in reportRows" :key="i" :class="{ tail: i === reportRows.length - 1 }"><td>{{ r.debit }}</td><td>{{ r.credit }}</td></tr>
                    <tr class="sum"><td>175.571.000,000</td><td>1.850.093.000,000</td></tr>
                    <tr class="red"><td>(3.233.575.000,00<br>0)</td><td></td></tr>
                    <tr class="sum"><td>325.691.000,000</td><td>3.560.166.000,000</td></tr>
                  </tbody>
                </table>
                <p class="sign-date">Ngày ..... tháng ..... năm .........</p>
                <p class="sign-role">Giám đốc</p>
                <p class="sign-note">(Ký, họ tên, đóng dấu)</p>
                <svg class="torn" viewBox="0 0 260 34"><path d="M-2 28 7 27 12 28 21 25 27 26 33 27 39 25 43 27 47 26 50 28 54 25 59 25 62 28 67 27 74 25 81 26 86 22 89 19 95 17 101 14 106 15 113 14 118 17 122 15 128 19 133 23 139 26 146 25 152 23 157 19 164 15 171 16 176 14 182 16 187 12 196 10 201 6 206 5 211 3 219 4 226 4 229 8 234 9 237 14 246 21 252 27 259 32 262 38 0 38z" /></svg>
              </article>
            </div>
          </div>

          <div class="footrow">
            <label class="check"><input v-model="expandAll" type="checkbox">Mở rộng/Thu gọn</label>
            <button type="button" class="btn custom">Tùy chỉnh báo cáo...</button>
            <span class="grow"></span>
            <button type="button" class="btn w75"><svg class="i16"><use href="#report" /></svg><span>Xem</span></button>
            <button type="button" class="btn w75"><svg class="i16"><use href="#ruler" /></svg><span>Sửa mẫu</span></button>
            <button type="button" class="btn w126"><svg class="i16"><use href="#ruler" /></svg><span>Lấy mẫu mặc định</span></button>
            <button type="button" class="btn w75"><svg class="i16"><use href="#help" /></svg><span>Giúp</span></button>
          </div>
        </section>
      </div>

      <footer class="status">
        <span><svg class="i16"><use href="#server" /></svg>Máy chủ: DESKTOP-CV4H2VA\MISASME2017</span>
        <span><svg class="i16"><use href="#db" /></svg>Tên DLKT: KETOAN2018</span>
        <span><svg class="i16"><use href="#user" /></svg>Người dùng: ADMIN</span>
        <span></span>
        <span></span>
        <span><b>Tổng đài tư vấn: MISA SUPPORT</b></span>
        <span>OVR</span>
        <span>NUM</span>
        <span></span>
        <span></span>
        <span>9:18 SA</span>
        <span>19/10/2019</span>
      </footer>
    </main>

    <section class="dialog" role="dialog" aria-label="Khấu trừ thuế">
      <header class="dlg-title">
        <svg class="i16"><use href="#notes" /></svg>
        <h2>Khấu trừ thuế - Công ty TNHH TM-KT-XD Anh Phát Đạt</h2>
        <button type="button" aria-label="Thu nhỏ cửa sổ"><svg viewBox="0 0 12 12"><path d="M2 6h8" stroke-width="2" /></svg></button>
        <button type="button" aria-label="Phóng to cửa sổ"><svg viewBox="0 0 12 12"><path d="M.5 1.500h11v9H.5zM0 2.500h12" /></svg></button>
        <button type="button" aria-label="Đóng cửa sổ"><svg viewBox="0 0 12 12"><path d="m3 2 6 7M9 2 3 9" stroke-width="2" /></svg></button>
      </header>

      <div class="toolbar">
        <template v-for="(t, i) in tools" :key="i">
          <button v-if="t.kind === 'btn'" type="button" class="tool" :disabled="t.off"><svg class="i16"><use :href="'#' + t.icon" /></svg>{{ t.label }}</button>
          <button v-else-if="t.kind === 'drop'" type="button" class="tdrop" :disabled="t.off" aria-label="Mở danh sách"><svg viewBox="0 0 6 3"><path d="M0 0h6L3 3z" /></svg></button>
          <i v-else class="tsep"></i>
        </template>
      </div>

      <div class="dlg-body">
        <h3>Khấu trừ thuế</h3>
        <div class="groups">
          <fieldset class="general">
            <legend>Thông tin chung</legend>
            <div class="frow">
              <label class="l1" for="period">Kỳ tính thuế</label>
              <div class="combo period">
                <select id="period" v-model="period"><option>Quý 1</option><option>Quý 2</option></select>
                <span class="drop"><svg viewBox="0 0 8 4"><path d="M0 0h8L4 4z" /></svg></span>
              </div>
              <label class="l-year" for="year">Năm</label>
              <div class="spin">
                <input id="year" v-model="year" type="text">
                <div><button type="button" aria-label="Tăng"><svg viewBox="0 0 4 2"><path d="M0 2h4L2 0z" /></svg></button><button type="button" aria-label="Giảm"><svg viewBox="0 0 4 2"><path d="M0 0h4L2 2z" /></svg></button></div>
              </div>
              <button type="button" class="btn load">Lấy dữ liệu</button>
            </div>
            <div class="frow desc">
              <label class="l1" for="desc">Diễn giải</label>
              <textarea id="desc" v-model="description"></textarea>
            </div>
            <div class="frow tax">
              <label class="l-in" for="tin">Thuế GTGT đầu vào được khấu trừ</label>
              <input id="tin" v-model="inputTax" class="num" type="text" readonly>
              <label class="l-out" for="tout">Thuế GTGT đầu ra</label>
              <input id="tout" v-model="outputTax" class="num wide" type="text" readonly>
            </div>
            <div class="frow refs">
              <span>Tham chiếu</span>
              <button type="button" class="btn icon" aria-label="Thêm tham chiếu"><svg class="i16"><use href="#addfind" /></svg></button>
            </div>
          </fieldset>
          <fieldset class="voucher">
            <legend>Chứng từ</legend>
            <div class="frow"><label for="d1">Ngày hạch toán</label><div class="combo"><input id="d1" v-model="postingDate" type="text"><button type="button" class="drop" aria-label="Chọn ngày hạch toán"><svg viewBox="0 0 8 4"><path d="M0 0h8L4 4z" /></svg></button></div></div>
            <div class="frow"><label for="d2">Ngày chứng từ</label><div class="combo"><input id="d2" v-model="voucherDate" type="text"><button type="button" class="drop" aria-label="Chọn ngày chứng từ"><svg viewBox="0 0 8 4"><path d="M0 0h8L4 4z" /></svg></button></div></div>
            <div class="frow"><label for="d3">Số chứng từ</label><div class="combo"><input id="d3" v-model="voucherNo" type="text"></div></div>
          </fieldset>
        </div>

        <button type="button" class="handle" aria-label="Thu gọn phần chung"><svg viewBox="0 0 6 3"><path d="M0 3h6L3 0z" fill="#fff" /></svg></button>
        <button type="button" class="tab on sub"><u>1</u>. Hạch toán</button>

        <table class="grid">
          <colgroup><col class="c1"><col class="c2"><col class="c2"><col class="c4"><col></colgroup>
          <thead>
            <tr><th v-for="c in columns" :key="c"><div><span>{{ c }}</span><svg><use href="#pin" /></svg></div></th></tr>
          </thead>
          <tbody>
            <tr><td class="first">Thuế GTGT được khấu trừ của hàng hó</td><td>33311</td><td>1331</td><td class="right">60.979.441</td><td>Khấu trừ thuế hoạt động sản xuất kinh doanh</td></tr>
            <tr class="new"><td>Bấm vào đây để thêm mới</td><td></td><td></td><td></td><td></td></tr>
            <tr v-for="n in 12" :key="n"><td></td><td></td><td></td><td></td><td></td></tr>
          </tbody>
          <tfoot>
            <tr><td class="dark">Số dòng = 1</td><td colspan="2"></td><td class="dark right">60.979.441</td><td></td></tr>
          </tfoot>
        </table>
      </div>
      <footer class="dlg-foot"><svg viewBox="0 0 11 11"><path d="M9 1h2M5 5h2M9 5h2M1 9h2M5 9h2M9 9h2" stroke="#35507c" stroke-width="2" /></svg></footer>
    </section>

    <footer class="taskbar">
      <button type="button" class="sys" aria-label="Start"><svg viewBox="0 0 16 16" width="17" height="17"><path d="M0 2.300 6.500 1.400v6.100H0zM7.300 1.300 16 0v7.500H7.300zM0 8.400h6.500v6.200L0 13.700zM7.300 8.400H16V16l-8.700-1.300z" fill="#fff" /></svg></button>
      <button type="button" class="sys" aria-label="Tìm kiếm"><svg viewBox="0 0 16 16" width="17" height="17"><circle cx="10" cy="6" r="5" /><path d="M6.500 9.500.5 15.500" /></svg></button>
      <button type="button" class="sys" aria-label="Cortana"><svg viewBox="0 0 16 16" width="17" height="17"><circle cx="8" cy="8" r="6.500" stroke-width="2" /></svg></button>
      <button type="button" class="sys gap" aria-label="Task view"><svg viewBox="0 0 16 16" width="17" height="17"><path d="M.5 0v2.500h10V0M.5 16v-2.500h10V16M.5 5h10v6H.5zM14 0v3M14 8v8" /><path d="M13 4h2v2.500h-2z" fill="#fff" stroke="none" /></svg></button>
      <button v-for="p in pinned" :key="p.icon" type="button" class="pin" :class="{ open: p.open }" :aria-label="p.name"><svg><use :href="'#' + p.icon" /></svg><b v-if="p.icon === 't-zalo'">Zalo</b></button>
      <button type="button" class="pin open current" aria-label="MISA"><svg><use href="#logo" /></svg></button>
      <span class="grow"></span>
      <svg class="tray" viewBox="0 0 16 16"><path d="m2 11 6-6 6 6" /></svg>
      <svg class="tray" viewBox="0 0 16 16"><path d="M0 5.500h3l3.500-3.500v12L3 10.500H0zM8.500 5.500q2 2.500 0 5M11 4q3 4 0 8M13.500 2.500q4 5.500 0 11" /></svg>
      <span class="eng">ENG</span>
      <time>9:18 AM<br>19/10/2019</time>
      <button type="button" class="notif" aria-label="Thông báo"><svg viewBox="0 0 16 16"><path d="M0 0h16v12H7l-3 3v-3H0z" fill="#fff" /><path d="M2.500 3.500h11M2.500 6h11M2.500 8.500h8" stroke="#1b2b40" /></svg><b>1</b></button>
    </footer>
  </div>
</template>

<style>
html, body { margin: 0; background: #cbdbf1; }
</style>

<style scoped>
* { box-sizing: border-box; }
.defs { position: absolute; width: 0; height: 0; }
.screen {
  --bg: #cbdbf1; --bar: #adc7e7; --title: #6596c8; --line: #7ba2d2; --on: #ffe594;
  --ui: "Open Sans", "Noto Sans", sans-serif;
  position: relative; display: flex; flex-direction: column; height: 100vh; overflow: hidden;
  font: 11px/14px "Liberation Sans", Arial, sans-serif; color: #000; background: var(--bg);
}
button { font: inherit; color: inherit; background: none; border: 0; padding: 0; margin: 0; white-space: nowrap; }
input, select, textarea { font: inherit; color: inherit; border: 0; border-radius: 0; margin: 0; padding: 0; background: none; outline: 0; min-width: 0; }
h1, h2, h3, p, ul { margin: 0; padding: 0; }
ul { list-style: none; }
.i16 { width: 16px; height: 16px; flex: none; }
.grow { flex: 1; }
.app { flex: 1; min-height: 0; display: flex; flex-direction: column; }

.titlebar { display: flex; flex: none; height: 23px; background: var(--title); color: #fff; overflow: hidden; }
.titlebar > .i16 { margin-top: 3px; }
h1 { flex: 1; margin-left: 6px; font: 12px/23px var(--ui); white-space: nowrap; overflow: hidden; }
.promo { display: flex; align-items: flex-start; height: 23px; padding: 0 7px 0 9px; font-weight: bold; font-size: 11px; line-height: 16px; }
.promo span { flex: 1; text-align: left; margin-left: 8px; }
.promo .chev { width: 10px; height: 6px; margin-top: 4px; fill: none; stroke: #fff; }
.faq { width: 168px; background: #00a0f0; }
.advice { width: 144px; background: #0066ff; }
.renew { width: 149px; background: #ff9226; }
.winctl { display: flex; width: 61px; align-items: center; justify-content: space-around; }
.winctl svg { display: block; width: 12px; height: 12px; fill: none; stroke: #000; }

.menus { display: flex; flex: none; justify-content: space-between; height: 45px; background: var(--bar); font: 11px/22px var(--ui); }
.bars { margin-left: 3px; padding-left: 13px; background: radial-gradient(circle, #7f9abf 1px, transparent 1px) 0 0 / 4px 4px repeat-y; }
.menubar { display: flex; gap: 14px; }
.menubar strong { margin-left: 16px; font: bold 12px/22px var(--ui); white-space: nowrap; }
.quickbar { display: flex; gap: 12px; }
.quickbar button { display: flex; align-items: center; gap: 7px; height: 22px; }
.quickbar button:first-child .i16 { margin-right: 3px; }
.globe { width: 22px; height: 22px; margin: 3px 16px 0 0; }

.workspace { flex: 1; min-height: 0; display: flex; gap: 5px; padding: 3px 9px 3px 3px; }
.sidebar { width: 175px; flex: none; display: flex; flex-direction: column; border: 1px solid var(--line); background: var(--bg); }
.side-head { display: flex; align-items: center; justify-content: space-between; height: 25px; padding: 0 6px 0 7px; border-bottom: 1px solid var(--line); }
.side-head h2 { font: bold 17px/24px "Liberation Sans", sans-serif; }
.side-head svg { display: block; width: 9px; height: 8px; fill: none; stroke: #35599a; }
.tasks { flex: 1; background: #fff; }
.tasks ul + ul { margin: 2px 0 0 2px; padding-top: 3px; border-top: 1px solid var(--line); }
.tasks a { display: flex; align-items: center; gap: 6px; height: 23px; padding: 0 0 2px 3px; color: #000; text-decoration: none; white-space: nowrap; }
.tasks ul + ul a { padding-left: 1px; }
.splitter { height: 7px; display: flex; align-items: center; justify-content: center; border: solid var(--line); border-width: 1px 0; }
.splitter i { width: 36px; border-top: 2px dotted #5b85bd; }
.modules button { display: flex; width: 100%; align-items: center; gap: 5px; height: 32px; padding-left: 3px; border-bottom: 1px solid var(--line); font: bold 11px/16px "Noto Sans", "Open Sans", sans-serif; }
.modules svg { width: 24px; height: 24px; }
.modules .active { background: var(--on); border-bottom-color: #f28c3c; }
.extras { display: flex; align-items: center; justify-content: flex-end; gap: 4px; height: 30px; padding-right: 5px; }
.extras svg { display: block; }
.more { margin-left: 3px; }
.more svg { width: 8px; height: 12px; }

.content { flex: 1; min-width: 0; display: flex; flex-direction: column; padding-top: 2px; }
.tabrow { display: flex; flex: none; height: 24px; align-items: flex-start; padding-right: 3px; }
.tab { height: 24px; padding: 0 14px 0 13px; border: 1px solid var(--line); border-bottom: 0; }
.tab.on { padding: 0 9px; background: var(--on); font-weight: bold; font-size: 12px; }
.tab + .tab { border-left: 0; }
.tabrow label { margin-left: auto; margin-right: 20px; line-height: 22px; }
.combo { display: flex; height: 21px; border: 1px solid var(--line); background: #fff; }
.combo select, .combo input { flex: 1; appearance: none; padding: 0 4px; }
.drop { display: flex; align-items: center; justify-content: center; width: 17px; background: var(--bar); }
.drop svg { width: 8px; height: 4px; }
.combo.lang { width: 99px; }

.panes { flex: 1; display: flex; gap: 5px; min-height: 0; padding-right: 1px; }
.treepane { width: 283px; flex: none; display: flex; flex-direction: column; border: 1px solid var(--line); background: #fff; }
.treebody { flex: 1; min-height: 0; display: flex; overflow: hidden; }
.tree { flex: 1; overflow: hidden; }
.tree li { display: flex; align-items: center; height: 20px; padding-left: 4px; white-space: nowrap; background: repeating-linear-gradient(#999 0 1px, transparent 1px 2px) 8px 0 / 1px 100% no-repeat; }
.tree .box { width: 9px; height: 9px; flex: none; border: 1px solid #8c8c8c; background: linear-gradient(#2b4f97, #2b4f97) center / 5px 1px no-repeat, #fff; }
.tree .box.plus { background: linear-gradient(#2b4f97, #2b4f97) center / 5px 1px no-repeat, linear-gradient(#2b4f97, #2b4f97) center / 1px 5px no-repeat, #fff; }
.tree .dots { width: 5px; border-top: 1px dotted #999; }
.tree .name { margin-left: 3px; padding: 1px 2px; }
.tree .leaf { padding-left: 28px; background: repeating-linear-gradient(#999 0 1px, transparent 1px 2px) 8px 0 / 1px 100% no-repeat, repeating-linear-gradient(#999 0 1px, transparent 1px 2px) 27px 0 / 1px 100% no-repeat; }
.tree .leaf .dots { width: 9px; }
.tree .sel { background: var(--on); }
.vscroll { width: 17px; display: flex; flex-direction: column; justify-content: flex-end; background: #d9d9d9; }
.vscroll button { display: flex; align-items: center; justify-content: center; height: 16px; background: var(--bg); }
.vscroll svg { width: 8px; height: 4px; }
.hscroll { display: flex; flex: none; height: 17px; background: #d9d9d9; }
.hscroll button { display: flex; align-items: center; justify-content: center; width: 17px; background: var(--bg); }
.hscroll svg { width: 5px; height: 8px; }
.thumb { width: 99px; margin: 1px 0 1px 1px; background: #86abd4; }
.hscroll .end { margin-left: auto; }
.corner { width: 17px; background: #f0f0f0; }

.preview { flex: 1; display: flex; justify-content: flex-end; align-items: flex-start; border: 1px solid #1f3f77; padding: 80px 8px 0 0; overflow: hidden; }
.paper { position: relative; width: 700px; padding: 10px 0 14px; background: #fff; border: solid #444; border-width: 1px 1px 0 0; font-family: "DejaVu Serif", serif; text-align: right; color: #222; }
.paper p { font-size: 13px; line-height: 14px; white-space: nowrap; }
.paper .form-no { padding-right: 129px; font-weight: bold; }
.paper .rule-1 { padding-right: 58px; font-size: 11px; line-height: 11px; font-style: italic; }
.paper .rule-2 { padding-right: 94px; font-size: 11px; line-height: 11px; font-style: italic; }
.paper .caption { padding: 15px 250px 0 0; font-weight: bold; }
.paper .unit { padding: 35px 45px 0 0; font-style: italic; }
.paper table { width: 226px; margin: 1px 42px 0 auto; border-collapse: collapse; table-layout: fixed; font: 11px/11px "DejaVu Sans", sans-serif; }
.paper th { padding: 0; border: 1px solid #222; text-align: center; font: bold 12px/12px "DejaVu Serif", serif; }
.paper td { height: 14px; padding: 0 4px 0 0; border: solid #222; border-width: 0 1px; border-bottom: 1px dotted #777; white-space: nowrap; }
.paper .h1 th { height: 23px; }
.paper .h2 th { height: 29px; }
.paper .h3 th { height: 15px; }
.paper .solid td, .paper .tail td, .paper .red td, .paper .sum td { border-bottom: 1px solid #222; }
.paper .sum td { font-weight: bold; font-size: 10px; color: #000; }
.paper .red td { height: 17px; color: #f0323c; font: bold 9px/8px "DejaVu Serif", serif; }
.paper .sign-date { padding: 30px 84px 0 0; font-style: italic; }
.paper .sign-role { padding-right: 158px; font-weight: bold; }
.paper .sign-note { padding-right: 116px; font-style: italic; }
.torn { position: absolute; right: -1px; bottom: -2px; width: 260px; height: 34px; fill: var(--bg); stroke: #444; }

.footrow { display: flex; flex: none; align-items: center; height: 40px; padding-top: 5px; }
.check { display: flex; align-items: center; gap: 6px; width: 111px; white-space: nowrap; }
.check input { appearance: none; width: 13px; height: 13px; border: 1px solid #222; background: #fff; margin-left: 1px; }
.btn { display: flex; align-items: center; justify-content: center; height: 23px; border: 1px solid var(--line); background: var(--bar); }
.btn span { flex: 1; text-align: center; }
.footrow .btn { padding: 0 4px; margin-left: 5px; }
.footrow .custom { width: 127px; margin-left: 0; }
.footrow .w75 { width: 75px; }
.footrow .w126 { width: 126px; }

.status { display: grid; flex: none; grid-template-columns: 261px 152px 123px 10px 1fr 181px 31px 32px 37px 36px 54px 62px; gap: 2px; height: 23px; padding: 2px 1px 2px 2px; background: var(--bar); }
.status span { display: flex; align-items: center; gap: 2px; padding-left: 2px; border: 1px solid var(--line); white-space: nowrap; }

.dialog { position: absolute; top: 97px; left: 278px; right: 278px; bottom: 138px; display: flex; flex-direction: column; border: 1px solid var(--title); border-top: 0; background: var(--bg); box-shadow: 1px 1px 4px rgba(0, 0, 0, .45); }
.dlg-title { display: flex; align-items: center; gap: 9px; height: 32px; flex: none; padding: 0 5px 0 2px; background: var(--title); color: #fff; }
.dlg-title h2 { flex: 1; margin-left: -4px; font: 12px/16px var(--ui); }
.dlg-title button svg { display: block; width: 12px; height: 12px; fill: none; stroke: #000; }
.toolbar { display: grid; flex: none; height: 43px; padding-left: 4px; background: var(--bar); font: 11px/16px var(--ui);
  grid-template-columns: 40px 16px 28px 16px 38px 42px 68px 38px 34px 46px 48px 8px 40px 54px 14px 34px 10px 8px 24px 10px 6px 64px 6px 40px 46px; }
.tool { display: flex; flex-direction: column; align-items: center; gap: 4px; padding-top: 4px; }
.tool:disabled { color: #7d8894; }
.tdrop { justify-self: start; width: 10px; }
.tdrop svg { display: block; margin: auto; width: 6px; height: 3px; }
.tdrop:disabled svg { fill: #55606e; }
.tsep { align-self: center; justify-self: center; width: 2px; height: 23px; background: var(--line); }

.dlg-body { flex: 1; display: flex; flex-direction: column; padding: 0 9px 9px; }
h3 { height: 39px; padding-left: 3px; font: bold 20px/39px var(--ui); }
.groups { display: flex; gap: 8px; height: 156px; }
fieldset { min-width: 0; margin: 0; border: 1px solid var(--line); padding: 9px 7px 0 8px; }
legend { padding: 0 2px; margin-left: -3px; font-weight: bold; line-height: 14px; }
.general { flex: 1; }
.voucher { width: 208px; flex: none; padding-top: 10px; }
.frow { display: flex; margin-bottom: 3px; }
.frow label { padding-top: 3px; line-height: 17px; white-space: nowrap; }
.general .frow:first-of-type { height: 22px; }
.l1 { width: 69px; flex: none; }
.combo.period { width: 101px; }
.period select { background: #0078d7; color: #fff; outline: 1px dotted #d88a3a; outline-offset: -1px; padding: 0 2px; }
.period .drop { background: var(--on); }
.l-year { margin: 0 12px 0 14px; }
.spin { display: flex; width: 64px; height: 21px; margin-right: 11px; border: 1px solid var(--line); background: #fff; }
.spin input { flex: 1; width: 0; text-align: right; padding-right: 2px; }
.spin div { display: grid; gap: 1px; width: 17px; }
.spin button { display: flex; align-items: center; justify-content: center; background: var(--bar); }
.spin svg { width: 4px; height: 2px; }
.load { width: 78px; height: 22px; }
textarea { flex: 1; height: 45px; resize: none; padding: 0 4px; border: 1px solid var(--line); background: #fff; line-height: 14px; }
.num { width: 120px; height: 21px; padding-right: 3px; text-align: right; border: 1px solid var(--line); background: #e5e5e5; }
.num.wide { flex: 1; }
.l-in { width: 181px; }
.l-out { width: 100px; margin-left: 21px; }
.refs { justify-content: space-between; padding-top: 2px; line-height: 23px; }
.icon { width: 23px; }
.voucher .frow { justify-content: space-between; }
.voucher .combo { width: 105px; }
.handle { align-self: center; display: flex; justify-content: center; align-items: center; width: 50px; height: 8px; margin: 5px 0 8px; border: 1px solid var(--line); background: var(--bar); }
.handle svg { width: 6px; height: 3px; }
.sub { align-self: flex-start; height: 19px; }

.grid { width: 100%; border-collapse: separate; border-spacing: 0; table-layout: fixed; border: 1px solid var(--line); border-bottom-width: 2px; background: #fff; }
.c1 { width: 209px; } .c2 { width: 95px; } .c4 { width: 120px; }
.grid th { height: 20px; padding: 0; background: var(--bar); border-right: 1px solid var(--line); border-bottom: 1px solid var(--line); font-weight: normal; }
.grid th:last-child { border-right: 0; }
.grid th div { display: flex; align-items: center; }
.grid th span { flex: 1; }
.grid th svg { width: 10px; height: 8px; margin-right: 1px; }
.grid td { height: 20px; padding: 0 5px; border-right: 1px dotted #b5b5b5; border-bottom: 1px dotted #b5b5b5; white-space: nowrap; overflow: hidden; }
.grid .first { padding: 0 0 0 5px; }
.grid .right { text-align: right; padding-right: 3px; }
.grid .new td { background: #ffffe1; }
.grid .new td:first-child { padding-left: 2px; }
.grid tfoot td { height: 19px; border: solid var(--line); border-width: 1px 1px 0 0; background: #f0f0f0; }
.grid tfoot td:last-child { border-right: 0; }
.grid tfoot td.dark { background: #d9d9d9; padding-left: 3px; }
.dlg-foot { display: flex; align-items: flex-end; justify-content: flex-end; height: 24px; flex: none; background: var(--bar); }
.dlg-foot svg { width: 11px; height: 11px; margin: 0 1px 1px 0; }

.taskbar { display: flex; flex: none; height: 40px; background: linear-gradient(90deg, #20353d 0 45%, #1b2a42 75%, #17233b); color: #fff; font: 11px/18px var(--ui); }
.sys { width: 48px; display: flex; align-items: center; justify-content: center; }
.sys svg { fill: none; stroke: #fff; }
.sys.gap { margin-right: 3px; }
.sys:first-child svg { stroke: none; }
.pin { position: relative; width: 49px; display: flex; align-items: center; justify-content: center; }
.pin svg { width: 24px; height: 24px; }
.pin b { position: absolute; font: bold 8px/10px var(--ui); color: #0b6cf5; }
.open { background: linear-gradient(#f7949c, #f7949c) center bottom / 40px 3px no-repeat; }
.current { width: 48px; border-right: 3px solid #32454e; background: linear-gradient(#f7949c, #f7949c) center bottom / 100% 3px no-repeat, #4a5f68; }
.tray { width: 16px; height: 16px; margin: 12px 8px 0 0; fill: none; stroke: #fff; }
.eng { line-height: 40px; margin: 0 9px 0 2px; font-size: 12px; }
time { text-align: center; padding-top: 2px; }
.notif { position: relative; width: 51px; padding: 0 0 0 13px; text-align: left; border-right: 1px solid #707a86; margin-right: 4px; }
.notif svg { display: block; width: 17px; height: 17px; }
.notif b { position: absolute; left: 20px; top: 19px; width: 16px; height: 16px; border: 1px solid #888; border-radius: 50%; background: #2a3038; font: bold 11px/14px var(--ui); text-align: center; }
</style>
